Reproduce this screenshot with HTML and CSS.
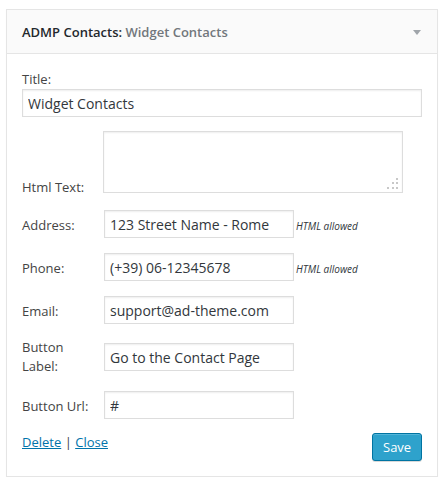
FILE: index.html
```html
<!DOCTYPE html>
<html>
<head>
<meta charset="utf-8">
<link rel="stylesheet" href="styles.css">
</head>
<body>
<div class="widget">
  <div class="widget-top">
    <h3 class="widget-title">ADMP Contacts:<span class="in-title"> Widget Contacts</span></h3>
    <span class="arrow"></span>
  </div>
  <div class="widget-inside">
    <label class="block-label">Title:</label>
    <input class="field wide" type="text" value="Widget Contacts">

    <div class="row row-text">
      <label class="lbl lbl-bottom">Html Text:</label>
      <span class="ta-wrap">
        <textarea class="field textarea"></textarea>
        <svg class="grip" width="12" height="12" viewBox="0 0 12 12">
          <g fill="#c8c8c8">
            <rect x="9" y="0" width="2" height="2"/>
            <rect x="5" y="4" width="2" height="2"/>
            <rect x="9" y="4" width="2" height="2"/>
            <rect x="0" y="9" width="2" height="2"/>
            <rect x="5" y="9" width="2" height="2"/>
            <rect x="9" y="9" width="2" height="2"/>
          </g>
        </svg>
      </span>
    </div>

    <div class="row r-address">
      <label class="lbl">Address:</label>
      <input class="field med" type="text" value="123 Street Name - Rome">
      <small class="note">HTML allowed</small>
    </div>

    <div class="row r-std">
      <label class="lbl">Phone:</label>
      <input class="field med" type="text" value="(+39) 06-12345678">
      <small class="note">HTML allowed</small>
    </div>

    <div class="row r-std">
      <label class="lbl">Email:</label>
      <input class="field med" type="text" value="support@ad-theme.com">
    </div>

    <div class="row r-two">
      <label class="lbl lbl-two">Button<br>Label:</label>
      <input class="field med" type="text" value="Go to the Contact Page">
    </div>

    <div class="row r-std">
      <label class="lbl">Button Url:</label>
      <input class="field med" type="text" value="#">
    </div>

    <div class="controls">
      <div class="links"><a href="#">Delete</a> <span class="sep">|</span> <a href="#">Close</a></div>
      <button class="save" type="button">Save</button>
    </div>
  </div>
</div>
</body>
</html>
```

FILE: styles.css
```css
* { box-sizing: border-box; }

body {
  margin: 0;
  background: #ffffff;
  font-family: "Open Sans", "Liberation Sans", sans-serif;
  font-size: 13px;
  color: #444;
}

.widget {
  margin: 9px 0 0 6px;
  width: 432px;
  border: 1px solid #e5e5e5;
  background: #fff;
  box-shadow: 0 1px 1px rgba(0,0,0,0.04);
}

.widget-top {
  height: 44px;
  background: #fafafa;
  border-bottom: 1px solid #e5e5e5;
  display: flex;
  align-items: center;
  justify-content: space-between;
  padding: 0 16px 0 15px;
}

.widget-title {
  margin: 0;
  font-size: 13px;
  font-weight: 600;
  color: #23282d;
  line-height: 18px;
}

.in-title {
  color: #72777c;
}

.arrow {
  width: 0;
  height: 0;
  border-left: 4px solid transparent;
  border-right: 4px solid transparent;
  border-top: 5px solid #a0a5aa;
  margin-top: 2px;
}

.widget-inside {
  padding: 15px 15px 15px 15px;
  display: flex;
  flex-direction: column;
}

.block-label {
  display: block;
  line-height: 18px;
  padding-top: 1px;
  margin-bottom: -1px;
  color: #444;
}

.field {
  font-family: "Open Sans", "Liberation Sans", sans-serif;
  font-size: 14px;
  color: #32373c;
  border: 1px solid #ddd;
  box-shadow: inset 0 1px 2px rgba(0,0,0,0.07);
  background: #fff;
  padding: 0 5px;
  height: 28px;
  margin: 0;
  outline: none;
  border-radius: 0;
}

.wide {
  width: 400px;
  margin-top: 2px;
}

.row {
  display: flex;
  align-items: center;
}

.lbl {
  width: 82px;
  flex: none;
  line-height: 18px;
  padding-top: 2px;
  color: #444;
}

.row-text {
  margin-top: 14px;
  align-items: flex-end;
}

.lbl-bottom {
  width: 81px;
  padding-top: 0;
  margin-bottom: -3px;
}

.ta-wrap {
  position: relative;
  display: block;
  width: 300px;
  height: 62px;
}

.textarea {
  display: block;
  width: 300px;
  height: 62px;
  resize: none;
}

.grip {
  position: absolute;
  right: 4px;
  bottom: 3px;
}

.r-address { margin-top: 17px; }
.r-std { margin-top: 15px; }
.r-two { margin-top: 14px; }

.lbl-two {
  line-height: 19px;
  padding-top: 0;
}

.med {
  width: 190px;
}

.note {
  margin-left: 2px;
  font-size: 10px;
  font-style: italic;
  color: #32373c;
  margin-top: 3px;
}

.controls {
  margin-top: 14px;
  display: flex;
  justify-content: space-between;
  align-items: flex-start;
}

.links {
  line-height: 18px;
  color: #444;
}

.links a {
  color: #0073aa;
  text-decoration: underline;
}

.save {
  font-family: "Open Sans", "Liberation Sans", sans-serif;
  font-size: 13px;
  color: #fff;
  background: #2ea2cc;
  border: 1px solid #0074a2;
  border-radius: 3px;
  box-shadow: inset 0 1px 0 rgba(120,200,230,0.5), 0 1px 0 rgba(0,0,0,0.15);
  height: 28px;
  width: 50px;
  padding: 0 10px 1px;
  margin: 0;
  line-height: 26px;
}
```
